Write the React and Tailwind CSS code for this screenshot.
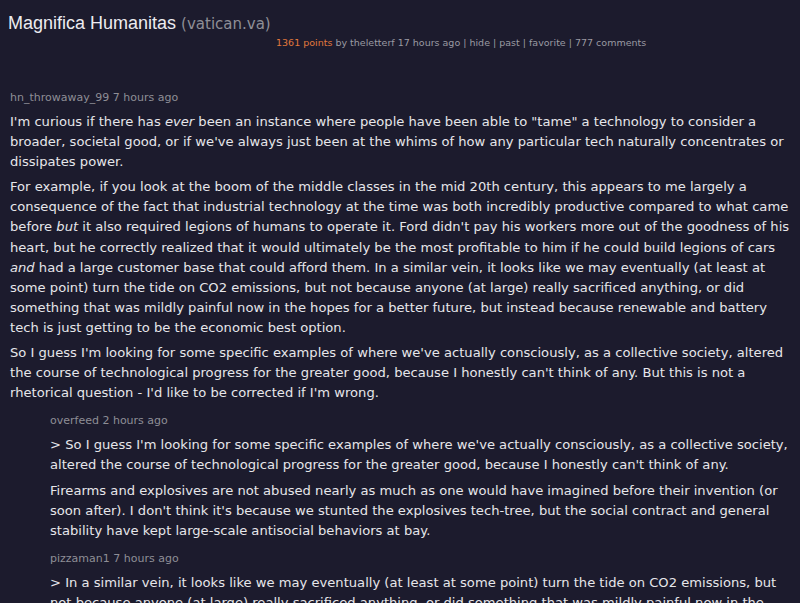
const comments = [
  {
    user: "hn_throwaway_99",
    age: "7 hours ago",
    depth: 0,
    paras: [
      <>I'm curious if there has <i>ever</i> been an instance where people have been able to "tame" a technology to consider a broader, societal good, or if we've always just been at the whims of how any particular tech naturally concentrates or dissipates power.</>,
      <>For example, if you look at the boom of the middle classes in the mid 20th century, this appears to me largely a consequence of the fact that industrial technology at the time was both incredibly productive compared to what came before <i>but</i> it also required legions of humans to operate it. Ford didn't pay his workers more out of the goodness of his heart, but he correctly realized that it would ultimately be the most profitable to him if he could build legions of cars <i>and</i> had a large customer base that could afford them. In a similar vein, it looks like we may eventually (at least at some point) turn the tide on CO2 emissions, but not because anyone (at large) really sacrificed anything, or did something that was mildly painful now in the hopes for a better future, but instead because renewable and battery tech is just getting to be the economic best option.</>,
      <>So I guess I'm looking for some specific examples of where we've actually consciously, as a collective society, altered the course of technological progress for the greater good, because I honestly can't think of any. But this is not a rhetorical question - I'd like to be corrected if I'm wrong.</>,
    ],
  },
  {
    user: "overfeed",
    age: "2 hours ago",
    depth: 1,
    paras: [
      <>&gt; So I guess I'm looking for some specific examples of where we've actually consciously, as a collective society, altered the course of technological progress for the greater good, because I honestly can't think of any.</>,
      <>Firearms and explosives are not abused nearly as much as one would have imagined before their invention (or soon after). I don't think it's because we stunted the explosives tech-tree, but the social contract and general stability have kept large-scale antisocial behaviors at bay.</>,
    ],
  },
  {
    user: "pizzaman1",
    age: "7 hours ago",
    depth: 1,
    paras: [
      <>&gt; In a similar vein, it looks like we may eventually (at least at some point) turn the tide on CO2 emissions, but not because anyone (at large) really sacrificed anything, or did something that was mildly painful now in the hopes for a better future, but instead because renewable and battery tech is just getting to be the economic best option.</>,
    ],
  },
];

function Comment({ c }) {
  return (
    <div className={c.depth ? "pl-[50px] pr-[6px]" : "pl-[10px] pr-[4px]"}>
      <div className="text-[11px] leading-[16px] text-[#8e8e96]">
        {c.user} {c.age}
      </div>
      <div className="mt-[6px] flex flex-col gap-[5px] text-[13.12px] leading-[20.1px] text-[#e6e6ea]">
        {c.paras.map((p, i) => (
          <p key={i}>{p}</p>
        ))}
      </div>
    </div>
  );
}

export default function App() {
  return (
    <div
      className="h-[603px] overflow-hidden bg-[#1c1b2d]"
      style={{ fontFamily: '"DejaVu Sans", Verdana, sans-serif' }}
    >
      <div className="pl-[8px] pt-[11px]">
        <h1
          className="text-[18px] leading-[24px] text-[#ececf0]"
          style={{ fontFamily: '"Liberation Sans", Arial, sans-serif' }}
        >
          Magnifica Humanitas{" "}
          <span
            className="text-[15px] text-[#8e8e96]"
            style={{ fontFamily: '"DejaVu Sans", Verdana, sans-serif' }}
          >
            (vatican.va)
          </span>
        </h1>
        <div className="pl-[268px] text-[9.5px] leading-[14px] text-[#9a9aa2]">
          <span className="text-[#e0783c]">1361 points</span> by theletterf 17 hours ago | hide | past | favorite | 777 comments
        </div>
      </div>
      <div className="mt-[40px] flex flex-col gap-[10px]">
        {comments.map((c, i) => (
          <Comment key={i} c={c} />
        ))}
      </div>
    </div>
  );
}
